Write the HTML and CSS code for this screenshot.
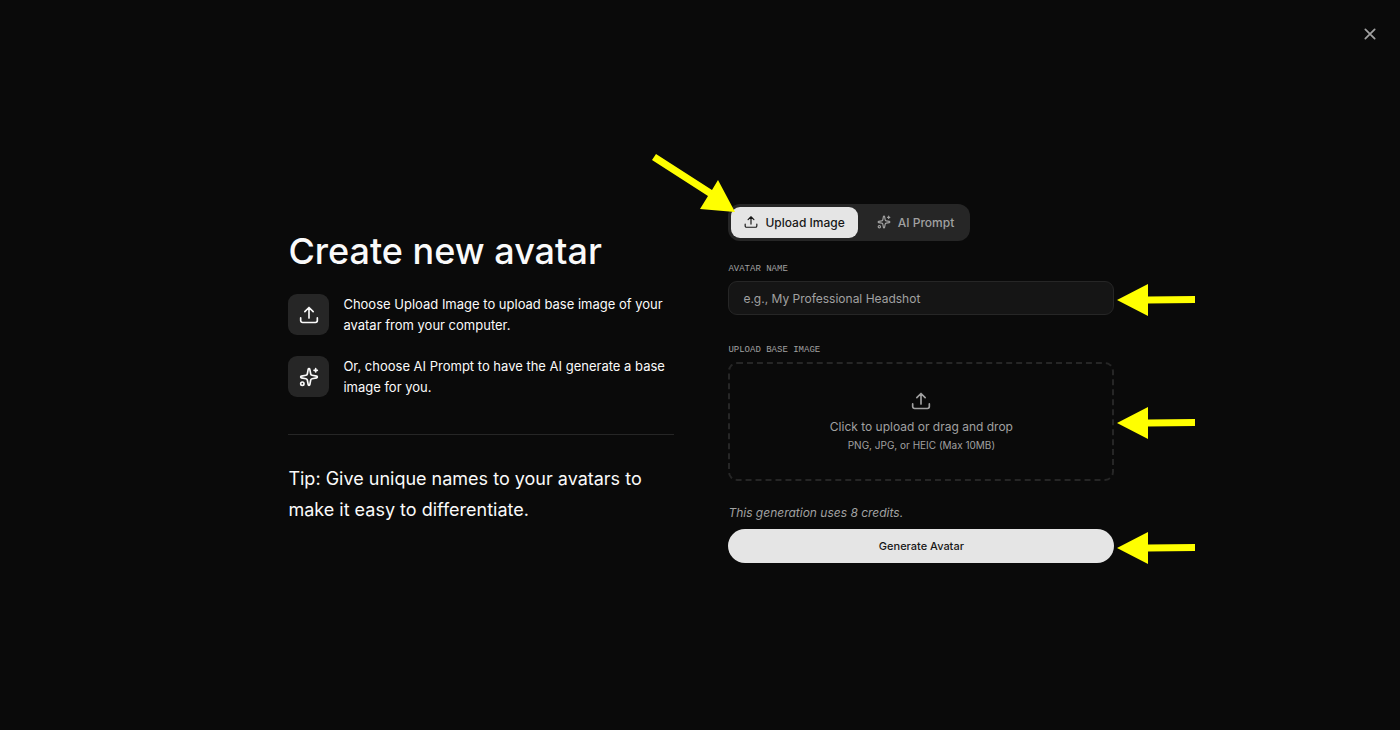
FILE: index.html
```
<!DOCTYPE html>
<html lang="en">
<head>
    <meta charset="UTF-8">
    <meta name="viewport" content="width=device-width, initial-scale=1.0">
    <title>Create new avatar</title>
    <link rel="stylesheet" href="styles.css">
</head>
<body>
    <svg class="symbols" aria-hidden="true">
        <symbol id="upload" viewBox="0 0 24 24">
            <path d="M12 15.5V3M7 8l5-5 5 5M2 15.500v3.200a2.300 2.300 0 0 0 2.300 2.300h15.400a2.300 2.300 0 0 0 2.300-2.300v-3.200"/>
        </symbol>
        <symbol id="sparkles" viewBox="0 0 24 24">
            <path d="M11.017 2.814a1 1 0 0 1 1.966 0l1.051 5.558a2 2 0 0 0 1.594 1.594l5.558 1.051a1 1 0 0 1 0 1.966l-5.558 1.051a2 2 0 0 0-1.594 1.594l-1.051 5.558a1 1 0 0 1-1.966 0l-1.051-5.558a2 2 0 0 0-1.594-1.594l-5.558-1.051a1 1 0 0 1 0-1.966l5.558-1.051a2 2 0 0 0 1.594-1.594z"/>
            <path d="M20 2v4M22 4h-4"/>
            <circle cx="4" cy="20" r="2"/>
        </symbol>
        <symbol id="arrow" viewBox="0 0 78 32">
            <path d="M0 16 31 0v12.500l47-.5v7l-47 .5V32z"/>
        </symbol>
    </svg>
    <button class="close" type="button" aria-label="Close">
        <svg class="close-icon" viewBox="0 0 24 24"><path d="M4 4l16 16M20 4L4 20"/></svg>
    </button>
    <main class="main">
        <section class="intro">
            <h1 class="title">Create new avatar</h1>
            <ul class="steps">
                <li class="step">
                    <span class="step-icon"><svg class="icon"><use href="#upload"/></svg></span>
                    <p class="step-text">Choose Upload Image to upload base image of your avatar from your computer.</p>
                </li>
                <li class="step">
                    <span class="step-icon"><svg class="icon"><use href="#sparkles"/></svg></span>
                    <p class="step-text">Or, choose AI Prompt to have the AI generate a base image for you.</p>
                </li>
            </ul>
            <hr class="divider">
            <p class="tip">Tip: Give unique names to your avatars to make it easy to differentiate.</p>
        </section>
        <form class="form">
            <div class="tabs">
                <button class="tab tab-active" type="button"><svg class="icon icon-small"><use href="#upload"/></svg>Upload Image</button>
                <button class="tab" type="button"><svg class="icon icon-small"><use href="#sparkles"/></svg>AI Prompt</button>
                <svg class="arrow-tab" viewBox="0 0 84 58"><path d="M4 0 60 36 66 26l17 32-35-3 8-13L0 6z"/></svg>
            </div>
            <div class="field">
                <label class="label" for="name">AVATAR NAME</label>
                <div class="control">
                    <input class="input" id="name" type="text" placeholder="e.g., My Professional Headshot">
                    <svg class="arrow"><use href="#arrow"/></svg>
                </div>
            </div>
            <div class="field">
                <label class="label" for="file">UPLOAD BASE IMAGE</label>
                <div class="control">
                    <label class="drop" for="file">
                        <svg class="icon"><use href="#upload"/></svg>
                        <span class="drop-title">Click to upload or drag and drop</span>
                        <span class="drop-hint">PNG, JPG, or HEIC (Max 10MB)</span>
                    </label>
                    <input class="file" id="file" type="file">
                    <svg class="arrow"><use href="#arrow"/></svg>
                </div>
            </div>
            <div class="submit">
                <p class="credits">This generation uses 8 credits.</p>
                <div class="control">
                    <button class="generate" type="submit">Generate Avatar</button>
                    <svg class="arrow"><use href="#arrow"/></svg>
                </div>
            </div>
        </form>
    </main>
</body>
</html>
```
FILE: styles.css
```
* {
    box-sizing: border-box;
}
body {
    margin: 0;
    background-color: #0a0a0a;
    color: #fafafa;
    font-family: Inter, sans-serif;
}
h1, p, ul {
    margin: 0;
    padding: 0;
}
button, input {
    font-family: inherit;
}
.symbols {
    position: absolute;
    width: 0;
    height: 0;
}
.close {
    position: absolute;
    top: 24px;
    right: 20px;
    display: flex;
    padding: 3px;
    border: 0;
    background: none;
    color: #a1a1a1;
}
.close-icon {
    width: 14px;
    height: 14px;
    fill: none;
    stroke: currentColor;
    stroke-width: 3;
    stroke-linecap: round;
}
.main {
    display: grid;
    grid-template-columns: 1fr 1fr;
    align-items: center;
    gap: 54px;
    width: 59%;
    min-height: 100vh;
    margin-left: 20.6%;
    padding-top: 36px;
}
.intro {
    padding-bottom: 11px;
}
.title {
    font-size: 36px;
    font-weight: 500;
    line-height: 42px;
    white-space: nowrap;
}
.steps {
    display: flex;
    flex-direction: column;
    gap: 20px;
    margin-top: 22px;
    list-style: none;
}
.step {
    display: flex;
    gap: 14px;
}
.step-icon {
    display: flex;
    flex-shrink: 0;
    justify-content: center;
    align-items: center;
    width: 41px;
    height: 41px;
    border-radius: 9px;
    background-color: #262626;
}
.icon {
    width: 20px;
    height: 20px;
    fill: none;
    stroke: currentColor;
    stroke-width: 2;
    stroke-linecap: round;
    stroke-linejoin: round;
}
.icon-small {
    width: 14px;
    height: 14px;
}
.step-text {
    font-size: 13px;
    line-height: 21px;
}
.divider {
    height: 1px;
    margin: 36px 0 28px;
    border: 0;
    background-color: #262626;
}
.tip {
    font-size: 18px;
    line-height: 31px;
}
.tabs {
    position: relative;
    display: inline-flex;
    gap: 6px;
    padding: 3px;
    border-radius: 12px;
    background-color: #262626;
}
.tab {
    display: flex;
    align-items: center;
    gap: 7px;
    height: 31px;
    padding: 0 13px;
    border: 0;
    border-radius: 9px;
    background: none;
    color: #a1a1a1;
    font-size: 12px;
    font-weight: 500;
}
.tab-active {
    background-color: #e5e5e5;
    color: #171717;
}
.field {
    margin-top: 20px;
}
.field + .field {
    margin-top: 27px;
}
.label {
    display: block;
    margin-bottom: 4px;
    color: #a1a1a1;
    font-family: "Liberation Mono", monospace;
    font-size: 9px;
    line-height: 16px;
}
.control {
    position: relative;
}
.input {
    display: block;
    width: 100%;
    height: 34px;
    padding: 1px 14px 0;
    border: 1px solid #262626;
    border-radius: 9px;
    background-color: #151515;
    color: #fafafa;
    font-size: 12px;
}
.input::placeholder {
    color: #a1a1a1;
}
.drop {
    display: flex;
    flex-direction: column;
    align-items: center;
    padding: 27px;
    border: 2px dashed #262626;
    border-radius: 9px;
    color: #a1a1a1;
}
.drop-title {
    margin-top: 7px;
    font-size: 12px;
    line-height: 17px;
}
.drop-hint {
    margin-top: 3px;
    font-size: 10px;
    line-height: 14px;
}
.file {
    position: absolute;
    width: 1px;
    height: 1px;
    opacity: 0;
}
.submit {
    margin-top: 21px;
}
.credits {
    margin-bottom: 5px;
    color: #a1a1a1;
    font-size: 12px;
    font-style: italic;
    line-height: 22px;
}
.generate {
    width: 100%;
    height: 34px;
    border: 0;
    border-radius: 17px;
    background-color: #e5e5e5;
    color: #171717;
    font-size: 11px;
    font-weight: 500;
}
/* pointers that sit over the form */
.arrow, .arrow-tab {
    position: absolute;
    fill: #ffff00;
}
.arrow {
    top: calc(50% - 14px);
    left: calc(100% + 3px);
    width: 78px;
    height: 32px;
}
.arrow-tab {
    top: -50px;
    left: -76px;
    width: 84px;
    height: 58px;
}
```
